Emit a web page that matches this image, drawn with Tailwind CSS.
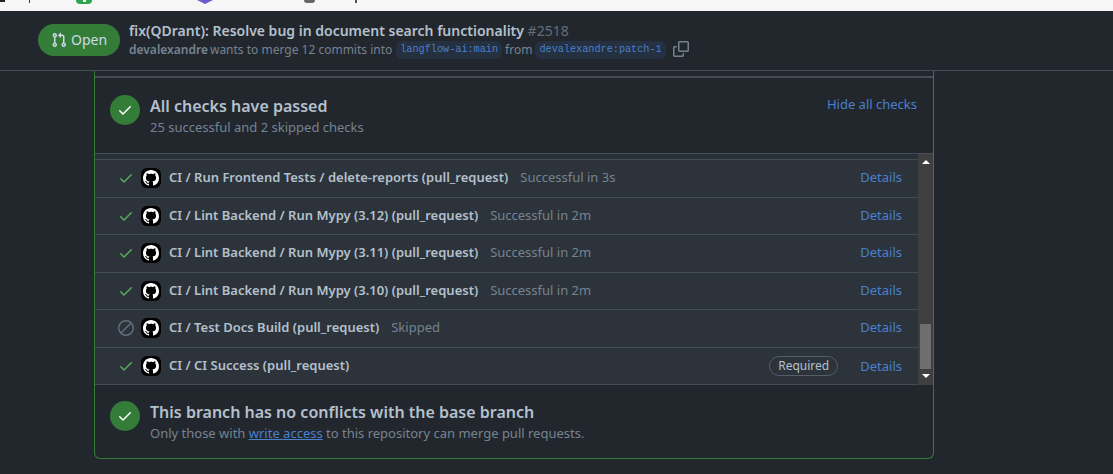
<!DOCTYPE html>
<html lang="en">

<head>
    <meta charset="UTF-8" />
    <title>fix(QDrant): Resolve bug in document search functionality #2518</title>
    <script src="https://cdn.jsdelivr.net/npm/@tailwindcss/browser@4"></script>
</head>

<body class="h-[474px] w-[1113px] overflow-hidden bg-[#22272e] font-['Noto_Sans',sans-serif] text-[#b4c0cc]">
    <!-- shared icons -->
    <svg class="hidden">
        <symbol id="check" viewBox="0 0 16 16"><path fill="currentColor" d="M13.78 4.22a.75.75 0 0 1 0 1.06l-7.25 7.25a.75.75 0 0 1-1.06 0L2.22 9.28a.751.751 0 0 1 .018-1.042.751.751 0 0 1 1.042-.018L6 10.94l6.72-6.72a.75.75 0 0 1 1.06 0Z" /></symbol>
        <symbol id="gh" viewBox="-2 -2 20 20"><path fill="currentColor" d="M8 0c4.42 0 8 3.58 8 8a8.013 8.013 0 0 1-5.45 7.59c-.4.08-.55-.17-.55-.38 0-.27.01-1.13.01-2.2 0-.75-.25-1.23-.54-1.48 1.78-.2 3.65-.88 3.65-3.95 0-.88-.31-1.59-.82-2.15.08-.2.36-1.02-.08-2.12 0 0-.67-.22-2.2.82-.64-.18-1.32-.27-2-.27-.68 0-1.36.09-2 .27-1.53-1.03-2.2-.82-2.2-.82-.44 1.1-.16 1.92-.08 2.12-.51.56-.82 1.28-.82 2.15 0 3.06 1.86 3.75 3.64 3.95-.23.2-.44.55-.51 1.07-.46.21-1.61.55-2.33-.66-.15-.24-.6-.83-1.23-.82-.67.01-.27.38.01.53.34.19.73.9.82 1.13.16.45.68 1.31 2.69.94 0 .67.01 1.3.01 1.49 0 .21-.15.45-.55.38A7.995 7.995 0 0 1 0 8c0-4.42 3.58-8 8-8Z" /></symbol>
    </svg>

    <!-- browser strip cut off at the top -->
    <div class="relative h-[11px] bg-[#f6f6f6]">
        <div class="absolute left-0 top-0 h-[2px] w-[5px] bg-[#222]"></div>
        <div class="absolute left-[29px] top-0 h-[3px] w-px bg-[#333]"></div>
        <div class="absolute left-[76px] top-0 flex h-[4px] w-4 justify-center rounded-b-sm bg-[#2da44e]"><div class="h-[2px] w-[3px] bg-white"></div></div>
        <div class="absolute left-[197px] top-0 h-0 w-0 border-x-[8px] border-t-[4px] border-x-transparent border-t-[#6a5acd]"></div>
        <div class="absolute left-[304px] top-0 h-[3px] w-[11px] rounded-b-full bg-[#666]"></div>
        <div class="absolute left-[355px] top-0 h-[3px] w-[2px] bg-[#555]"></div>
    </div>

    <!-- sticky PR header -->
    <header class="flex h-[60px] items-start border-b border-[#444c56] bg-[#22272e] pl-[38px]">
        <div class="mt-[13px] flex h-8 w-[82px] items-center justify-center gap-1 rounded-full bg-[#347d39] text-sm text-[#cdd9e5]">
            <svg width="16" height="16" viewBox="0 0 16 16" fill="currentColor">
                <path d="M1.5 3.25a2.25 2.25 0 1 1 3 2.122v5.256a2.251 2.251 0 1 1-1.5 0V5.372A2.25 2.25 0 0 1 1.5 3.25Zm5.677-.177L9.573.677A.25.25 0 0 1 10 .854V2.5h1A2.5 2.5 0 0 1 13.5 5v5.628a2.251 2.251 0 1 1-1.5 0V5a1 1 0 0 0-1-1h-1v1.646a.25.25 0 0 1-.427.177L7.177 3.427a.25.25 0 0 1 0-.354ZM3.75 2.5a.75.75 0 1 0 0 1.5.75.75 0 0 0 0-1.5Zm0 9.5a.75.75 0 1 0 0 1.5.75.75 0 0 0 0-1.5Zm8.25.75a.75.75 0 1 0 1.5 0 .75.75 0 0 0-1.5 0Z" />
            </svg>
            Open
        </div>
        <div class="ml-[9px] mt-[10px]">
            <div class="text-sm leading-[20px]">
                <span class="font-semibold">fix(QDrant): Resolve bug in document search functionality</span>
                <span class="text-[#636e7b]">#2518</span>
            </div>
            <div class="flex items-center text-xs leading-[18px] text-[#768390]">
                <span class="font-semibold">devalexandre</span>
                <span class="ml-[2px]">wants to merge 12 commits into</span>
                <span class="ml-1 rounded-md bg-[#4184e4]/10 px-1 font-['Liberation_Mono',monospace] text-[10.2px] leading-[18px] text-[#4a80cc]">langflow-ai:main</span>
                <span class="ml-[3px]">from</span>
                <span class="ml-[3px] rounded-md bg-[#4184e4]/10 px-1 font-['Liberation_Mono',monospace] text-[10.2px] leading-[18px] text-[#4a80cc]">devalexandre:patch-1</span>
                <svg class="-mt-[3px] ml-[7px]" width="16" height="16" viewBox="0 0 16 16" fill="currentColor">
                    <path d="M0 6.75C0 5.784.784 5 1.75 5h1.5a.75.75 0 0 1 0 1.5h-1.5a.25.25 0 0 0-.25.25v7.5c0 .138.112.25.25.25h7.5a.25.25 0 0 0 .25-.25v-1.5a.75.75 0 0 1 1.5 0v1.5A1.75 1.75 0 0 1 9.25 16h-7.5A1.75 1.75 0 0 1 0 14.25Z" />
                    <path d="M5 1.75C5 .784 5.784 0 6.75 0h7.5C15.216 0 16 .784 16 1.75v7.5A1.75 1.75 0 0 1 14.25 11h-7.5A1.75 1.75 0 0 1 5 9.25Zm1.75-.25a.25.25 0 0 0-.25.25v7.5c0 .138.112.25.25.25h7.5a.25.25 0 0 0 .25-.25v-7.5a.25.25 0 0 0-.25-.25Z" />
                </svg>
            </div>
        </div>
    </header>

    <!-- merge box -->
    <main class="ml-[94px] w-[840px] rounded-b-md border-x border-b border-[#347d39]">
        <div class="h-[7px] border-b-2 border-[#444c56]"></div>

        <section class="flex h-[75px] items-start justify-between pr-4">
            <div class="flex items-start pl-[15px] pt-[17px]">
                <span class="flex h-[30px] w-[30px] items-center justify-center rounded-full bg-[#347d39] text-white">
                    <svg class="h-4 w-4"><use href="#check" /></svg>
                </span>
                <div class="ml-[10px]">
                    <h3 class="text-base font-semibold leading-[22px]">All checks have passed</h3>
                    <p class="text-[13px] leading-[20px] text-[#768390]">25 successful and 2 skipped checks</p>
                </div>
            </div>
            <a class="pt-4 text-[13px] leading-[20px] text-[#4a80cc]">Hide all checks</a>
        </section>

        <div class="flex h-[232px] border-t border-[#444c56]">
            <div class="w-[823px] bg-[#2a3037] pt-[5px] text-[13px]">
                <div class="flex h-[39px] items-center border-y border-[#444c56] bg-[#2d333b] pb-px pl-[23px] pr-4">
                    <svg class="h-4 w-4 text-[#57ab5a]"><use href="#check" /></svg>
                    <svg class="ml-[7px] h-5 w-5 rounded-md bg-black text-white"><use href="#gh" /></svg>
                    <span class="ml-2 font-semibold">CI / Run Frontend Tests / delete-reports (pull_request)</span>
                    <span class="ml-3 text-[#768390]">Successful in 3s</span>
                    <a class="ml-auto text-[#4a80cc]">Details</a>
                </div>
                <div class="flex h-[37px] items-center border-b border-[#444c56] bg-[#2d333b] pl-[23px] pr-4">
                    <svg class="h-4 w-4 text-[#57ab5a]"><use href="#check" /></svg>
                    <svg class="ml-[7px] h-5 w-5 rounded-md bg-black text-white"><use href="#gh" /></svg>
                    <span class="ml-2 font-semibold">CI / Lint Backend / Run Mypy (3.12) (pull_request)</span>
                    <span class="ml-3 text-[#768390]">Successful in 2m</span>
                    <a class="ml-auto text-[#4a80cc]">Details</a>
                </div>
                <div class="flex h-[38px] items-center border-b border-[#444c56] bg-[#2d333b] pb-px pl-[23px] pr-4">
                    <svg class="h-4 w-4 text-[#57ab5a]"><use href="#check" /></svg>
                    <svg class="ml-[7px] h-5 w-5 rounded-md bg-black text-white"><use href="#gh" /></svg>
                    <span class="ml-2 font-semibold">CI / Lint Backend / Run Mypy (3.11) (pull_request)</span>
                    <span class="ml-3 text-[#768390]">Successful in 2m</span>
                    <a class="ml-auto text-[#4a80cc]">Details</a>
                </div>
                <div class="flex h-[37px] items-center border-b border-[#444c56] bg-[#2d333b] pl-[23px] pr-4">
                    <svg class="h-4 w-4 text-[#57ab5a]"><use href="#check" /></svg>
                    <svg class="ml-[7px] h-5 w-5 rounded-md bg-black text-white"><use href="#gh" /></svg>
                    <span class="ml-2 font-semibold">CI / Lint Backend / Run Mypy (3.10) (pull_request)</span>
                    <span class="ml-3 text-[#768390]">Successful in 2m</span>
                    <a class="ml-auto text-[#4a80cc]">Details</a>
                </div>
                <div class="flex h-[38px] items-center border-b border-[#444c56] bg-[#2d333b] pb-px pl-[23px] pr-4">
                    <svg class="h-4 w-4 text-[#636e7b]" viewBox="0 0 16 16" fill="currentColor"><path d="M8 0a8 8 0 1 1 0 16A8 8 0 0 1 8 0ZM1.5 8a6.5 6.5 0 0 0 10.535 5.096L2.904 3.965A6.47 6.47 0 0 0 1.5 8Zm2.465-5.096 9.131 9.131A6.5 6.5 0 0 0 3.965 2.904Z" transform="rotate(90 8 8)" /></svg>
                    <svg class="ml-[7px] h-5 w-5 rounded-md bg-black text-white"><use href="#gh" /></svg>
                    <span class="ml-2 font-semibold">CI / Test Docs Build (pull_request)</span>
                    <span class="ml-3 text-[#768390]">Skipped</span>
                    <a class="ml-auto text-[#4a80cc]">Details</a>
                </div>
                <div class="flex h-[37px] items-center border-b border-[#444c56] bg-[#2d333b] pl-[23px] pr-4">
                    <svg class="h-4 w-4 text-[#57ab5a]"><use href="#check" /></svg>
                    <svg class="ml-[7px] h-5 w-5 rounded-md bg-black text-white"><use href="#gh" /></svg>
                    <span class="ml-2 font-semibold">CI / CI Success (pull_request)</span>
                    <span class="ml-auto rounded-full border border-[#545d68] px-2 text-xs leading-[18px]">Required</span>
                    <a class="ml-[22px] mt-px text-[#4a80cc]">Details</a>
                </div>
            </div>
            <!-- scrollbar -->
            <div class="flex w-[15px] flex-col items-center bg-[#3f3f3f] pb-[7px] pt-[6px]">
                <div class="h-0 w-0 border-x-[4px] border-b-[4px] border-x-transparent border-b-white"></div>
                <div class="mb-[5px] mt-auto h-[45px] w-[11px] bg-[#6e6e6e]"></div>
                <div class="h-0 w-0 border-x-[4px] border-t-[4px] border-x-transparent border-t-white"></div>
            </div>
        </div>

        <section class="flex h-[73px] items-start pl-[15px] pt-4">
            <span class="flex h-[30px] w-[30px] items-center justify-center rounded-full bg-[#347d39] text-white">
                <svg class="h-4 w-4"><use href="#check" /></svg>
            </span>
            <div class="ml-[10px]">
                <h3 class="text-base font-semibold leading-[22px]">This branch has no conflicts with the base branch</h3>
                <p class="text-[13px] leading-[20px] text-[#768390]">Only those with <a class="text-[#4a80cc] underline">write access</a> to this repository can merge pull requests.</p>
            </div>
        </section>
    </main>
</body>

</html>
